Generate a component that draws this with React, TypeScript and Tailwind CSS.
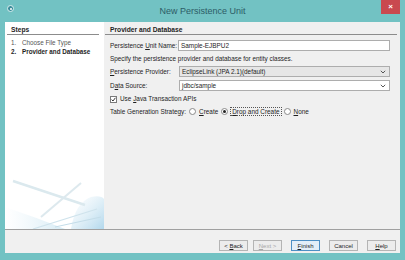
import React from 'react';

const font = { fontFamily: '"Liberation Sans", Arial, sans-serif' };

function Chevron() {
  return (
    <svg width="6" height="4" viewBox="0 0 6 4" className="shrink-0">
      <path d="M0.8 0.8 L3 3 L5.2 0.8" fill="none" stroke="#444" strokeWidth="0.9" />
    </svg>
  );
}

function Btn({ children, focused, disabled }: { children: React.ReactNode; focused?: boolean; disabled?: boolean }) {
  return (
    <div
      className={`w-[29px] h-[11px] flex items-center justify-center border text-[6px] leading-none whitespace-pre ${
        focused ? 'border-[#4d8fc4] bg-[#e3eef8]' : 'border-[#b4b4b4] bg-[#ececec]'
      } ${disabled ? 'text-[#a6a6a6]' : 'text-[#1e1e1e]'}`}
    >
      {children}
    </div>
  );
}

function Radio({ checked }: { checked?: boolean }) {
  return (
    <div className="w-[7px] h-[7px] rounded-full border border-[#8a8a8a] bg-white flex items-center justify-center shrink-0">
      {checked && <div className="w-[3px] h-[3px] rounded-full bg-[#222]" />}
    </div>
  );
}

export default function App() {
  return (
    <div className="w-[405px] h-[260px] bg-[#72c2c3] flex flex-col text-[#1e1e1e]" style={font}>
      {/* title bar */}
      <div className="h-[22px] relative flex items-center justify-center shrink-0">
        <div className="absolute left-[7px] top-[5px] w-[7px] h-[7px] rounded-full bg-[#3b8c9a] border border-[#d8eef0] flex items-center justify-center">
          <div className="w-[2px] h-[2px] rounded-full bg-white" />
        </div>
        <span className="text-[9px] text-[#2d5c66] leading-none">New Persistence Unit</span>
        <div className="absolute right-[5px] top-0 w-[19px] h-[14px] bg-[#c9494f] flex items-center justify-center">
          <span className="text-white text-[8px] font-bold leading-none">×</span>
        </div>
      </div>

      {/* body */}
      <div className="flex-1 mx-[5px] bg-[#f0f0f0] flex flex-col">
        <div className="flex-1 flex">
          {/* steps panel */}
          <div className="w-[99px] bg-white flex flex-col relative overflow-hidden">
            <div className="pt-[4px] mx-[2px] mr-[5px] border-b border-[#8c8c8c]">
              <div className="pl-[4px] text-[6.7px] font-bold leading-[8px]">Steps</div>
            </div>
            <div className="pl-[6px] mt-[4px] text-[6.3px] leading-[8.5px]">
              <div className="flex text-[#555]">
                <span className="w-[11px]">1.</span>
                <span>Choose File Type</span>
              </div>
              <div className="flex font-bold">
                <span className="w-[11px]">2.</span>
                <span>Provider and Database</span>
              </div>
            </div>
            <svg className="absolute left-0 bottom-0" width="99" height="52" viewBox="0 0 99 52">
              <defs>
                <linearGradient id="g1" x1="0" y1="0" x2="1" y2="1">
                  <stop offset="0" stopColor="#d6ebf5" stopOpacity="0" />
                  <stop offset="1" stopColor="#a9d3ea" stopOpacity="0.9" />
                </linearGradient>
                <linearGradient id="g2" x1="0" y1="0" x2="1" y2="0">
                  <stop offset="0" stopColor="#e3f1f8" stopOpacity="0" />
                  <stop offset="1" stopColor="#d0e8f3" stopOpacity="0.9" />
                </linearGradient>
              </defs>
              <path d="M0 30 Q30 40 60 52 L0 52 Z" fill="url(#g2)" />
              <path d="M66 52 Q70 26 86 20 Q96 18 99 22 L99 52 Z" fill="url(#g1)" />
              <line x1="8" y1="4" x2="80" y2="28" stroke="#dbe9ee" strokeWidth="2.5" />
              <line x1="76" y1="6" x2="36" y2="40" stroke="#dde9ee" strokeWidth="2" />
              <line x1="28" y1="52" x2="92" y2="32" stroke="#cfe3ec" strokeWidth="1.2" />
              <line x1="50" y1="50" x2="96" y2="40" stroke="#c4dde9" strokeWidth="1" />
            </svg>
          </div>

          {/* main panel */}
          <div className="flex-1 pl-[1px] pr-[3px] pt-[4px] text-[6.4px]">
            <div className="border-b border-[#8c8c8c]">
              <div className="pl-[5px] text-[6.7px] font-bold leading-[8px]">Provider and Database</div>
            </div>
            <div className="pl-[5px] pr-[7px]">
              <div className="flex items-center mt-[5px] h-[11px]">
                <span className="w-[68px] shrink-0">
                  Persistence <span className="underline">U</span>nit Name:
                </span>
                <div className="flex-1 h-[11px] bg-white border border-[#adadad] flex items-center pl-[2px]">
                  Sample-EJBPU2
                </div>
              </div>
              <div className="mt-[4px] leading-[8px]">Specify the persistence provider and database for entity classes.</div>
              <div className="flex items-center mt-[3px] h-[11px]">
                <span className="w-[69px] shrink-0">
                  <span className="underline">P</span>ersistence Provider:
                </span>
                <div className="flex-1 h-[11px] bg-[#e6e6e6] border border-[#adadad] flex items-center justify-between pl-[2px] pr-[3px]">
                  <span>EclipseLink (JPA 2.1)(default)</span>
                  <Chevron />
                </div>
              </div>
              <div className="flex items-center mt-[3px] h-[11px]">
                <span className="w-[69px] shrink-0">
                  D<span className="underline">a</span>ta Source:
                </span>
                <div className="flex-1 h-[11px] bg-white border border-[#adadad] flex items-center justify-between pl-[2px] pr-[3px]">
                  <span>jdbc/sample</span>
                  <Chevron />
                </div>
              </div>
              <div className="flex items-center mt-[4px] h-[8px] gap-[3px]">
                <div className="w-[7px] h-[7px] bg-white border border-[#7a7a7a] flex items-center justify-center">
                  <svg width="5" height="5" viewBox="0 0 5 5">
                    <path d="M0.6 2.6 L2 4 L4.4 0.8" fill="none" stroke="#222" strokeWidth="0.9" />
                  </svg>
                </div>
                <span>
                  Use <span className="underline">J</span>ava Transaction APIs
                </span>
              </div>
              <div className="flex items-center mt-[4px] h-[9px]">
                <span className="mr-[3px]">Table Generation Strategy:</span>
                <Radio />
                <span className="ml-[3px] mr-[3px]">
                  <span className="underline">C</span>reate
                </span>
                <Radio checked />
                <span className="ml-[2px] mr-[2px] px-[1px] border border-dotted border-[#555] leading-[7px]">
                  <span className="underline">D</span>rop and Create
                </span>
                <Radio />
                <span className="ml-[3px]">
                  <span className="underline">N</span>one
                </span>
              </div>
            </div>
          </div>
        </div>

        {/* buttons */}
        <div className="h-[24px] shrink-0 border-t border-[#a0a0a0] flex justify-end items-start pt-[10px] pr-[4px]">
          <div className="flex gap-[5px]">
            <Btn>
              {'< '}<span className="underline">B</span>ack
            </Btn>
            <Btn disabled>
              <span className="underline">N</span>{'ext >'}
            </Btn>
          </div>
          <div className="flex gap-[9px] ml-[9px]">
            <Btn focused>
              <span className="underline">F</span>inish
            </Btn>
            <Btn>Cancel</Btn>
            <Btn>
              <span className="underline">H</span>elp
            </Btn>
          </div>
        </div>
      </div>
      <div className="h-[7px] shrink-0" />
    </div>
  );
}
